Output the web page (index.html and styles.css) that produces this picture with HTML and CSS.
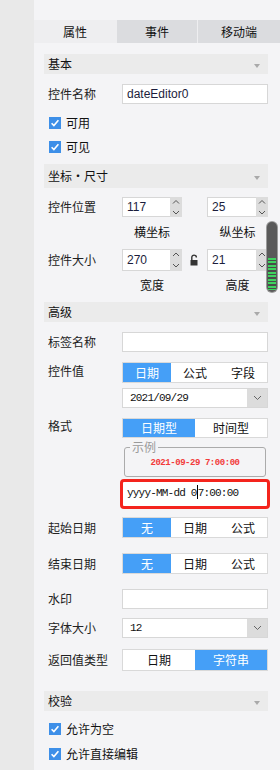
FILE: index.html
```html
<!DOCTYPE html>
<html lang="zh">
<head>
<meta charset="utf-8">
<title>属性</title>
<link rel="stylesheet" href="styles.css">
</head>
<body>
<div class="app">
  <div class="side"></div>
  <div class="panel">
    <div class="tabs">
      <div class="tab active">属性</div>
      <div class="tab">事件</div>
      <div class="tab">移动端</div>
    </div>
    <div class="content">
      <div class="sec m11">基本<i class="tri"></i></div>

      <div class="row m10 h20">
        <span class="lbl">控件名称</span>
        <div class="inp">dateEditor0</div>
      </div>
      <div class="chk m11"><svg class="box" width="12" height="12" viewBox="0 0 12 12"><rect width="12" height="12" fill="#3d8fe8"/><path d="M2.6 6.2 L4.9 8.6 L9.4 3.2" fill="none" stroke="#fff" stroke-width="1.6"/></svg>可用</div>
      <div class="chk m8"><svg class="box" width="12" height="12" viewBox="0 0 12 12"><rect width="12" height="12" fill="#3d8fe8"/><path d="M2.6 6.2 L4.9 8.6 L9.4 3.2" fill="none" stroke="#fff" stroke-width="1.6"/></svg>可见</div>

      <div class="sec sec-tall m9">坐标・尺寸<i class="tri"></i></div>

      <div class="row m9 h20">
        <span class="lbl">控件位置</span>
        <div class="pair">
          <div class="spin"><span class="num">117</span><span class="arrows"><svg width="12" height="20" viewBox="0 0 12 20"><path d="M3 6.5 L6 3.5 L9 6.5 M3 14 L6 17 L9 14" fill="none" stroke="#555" stroke-width="1"/></svg></span></div>
          <span class="gapcell"></span>
          <div class="spin"><span class="num">25</span><span class="arrows"><svg width="12" height="20" viewBox="0 0 12 20"><path d="M3 6.5 L6 3.5 L9 6.5 M3 14 L6 17 L9 14" fill="none" stroke="#555" stroke-width="1"/></svg></span></div>
        </div>
      </div>
      <div class="row m5 h20">
        <span class="lbl"></span>
        <div class="pair subs"><span>横坐标</span><span></span><span>纵坐标</span></div>
      </div>

      <div class="row m7 h22">
        <span class="lbl">控件大小</span>
        <div class="pair">
          <div class="spin"><span class="num">270</span><span class="arrows"><svg width="12" height="22" viewBox="0 0 12 22"><path d="M3 7 L6 4 L9 7 M3 15 L6 18 L9 15" fill="none" stroke="#555" stroke-width="1"/></svg></span></div>
          <span class="gapcell"><svg width="9" height="12" viewBox="0 0 9 12"><path d="M1.8 6 V3.4 A2.3 2.3 0 0 1 6.4 3.4" fill="none" stroke="#333" stroke-width="1.4"/><rect x="0.5" y="6" width="7" height="5.5" fill="#333"/></svg></span>
          <div class="spin"><span class="num">21</span><span class="arrows"><svg width="12" height="22" viewBox="0 0 12 22"><path d="M3 7 L6 4 L9 7 M3 15 L6 18 L9 15" fill="none" stroke="#555" stroke-width="1"/></svg></span></div>
        </div>
      </div>
      <div class="row m4 h20">
        <span class="lbl"></span>
        <div class="pair subs"><span>宽度</span><span></span><span>高度</span></div>
      </div>

      <div class="sec m7">高级<i class="tri"></i></div>

      <div class="row m10 h20">
        <span class="lbl">标签名称</span>
        <div class="inp"></div>
      </div>

      <div class="row top m10">
        <span class="lbl lh19">控件值</span>
        <div class="field">
          <div class="seg s3 h21"><span class="on">日期</span><span>公式</span><span>字段</span></div>
          <div class="sel m5"><span class="val mono">2021/09/29</span><span class="btn"><svg width="9" height="6" viewBox="0 0 9 6"><path d="M1 1 L4.5 4.5 L8 1" fill="none" stroke="#666" stroke-width="1"/></svg></span></div>
        </div>
      </div>

      <div class="row top m10">
        <span class="lbl lh17">格式</span>
        <div class="field">
          <div class="seg s2 h20"><span class="on">日期型</span><span>时间型</span></div>
          <div class="sample">
            <span class="legend">示例</span>
            <span class="sample-text">2021-09-29 7:00:00</span>
          </div>
          <div class="hl"><span class="mono">yyyy-MM-dd 0<i class="caret"></i>7:00:00</span></div>
        </div>
      </div>

      <div class="row m8">
        <span class="lbl">起始日期</span>
        <div class="seg s3 h21 field"><span class="on">无</span><span>日期</span><span>公式</span></div>
      </div>
      <div class="row m15">
        <span class="lbl">结束日期</span>
        <div class="seg s3 h21 field"><span class="on">无</span><span>日期</span><span>公式</span></div>
      </div>

      <div class="row m15 h20">
        <span class="lbl">水印</span>
        <div class="inp"></div>
      </div>

      <div class="row m9">
        <span class="lbl">字体大小</span>
        <div class="sel field"><span class="val mono">12</span><span class="btn"><svg width="9" height="6" viewBox="0 0 9 6"><path d="M1 1 L4.5 4.5 L8 1" fill="none" stroke="#666" stroke-width="1"/></svg></span></div>
      </div>

      <div class="row m11">
        <span class="lbl">返回值类型</span>
        <div class="seg s2 h22 field"><span>日期</span><span class="on">字符串</span></div>
      </div>

      <div class="sec m20">校验<i class="tri"></i></div>
      <div class="chk m10"><svg class="box" width="12" height="12" viewBox="0 0 12 12"><rect width="12" height="12" fill="#3d8fe8"/><path d="M2.6 6.2 L4.9 8.6 L9.4 3.2" fill="none" stroke="#fff" stroke-width="1.6"/></svg>允许为空</div>
      <div class="chk m9"><svg class="box" width="12" height="12" viewBox="0 0 12 12"><rect width="12" height="12" fill="#3d8fe8"/><path d="M2.6 6.2 L4.9 8.6 L9.4 3.2" fill="none" stroke="#fff" stroke-width="1.6"/></svg>允许直接编辑</div>
    </div>
    <div class="scrollbar"><div class="grip"></div></div>
  </div>
</div>
</body>
</html>
```

FILE: styles.css
```css
* { box-sizing: border-box; }
html, body { margin: 0; padding: 0; }
body {
  font-family: "Noto Sans CJK SC", "Liberation Sans", sans-serif;
  font-size: 12px;
  color: #222;
  background: #f4f4f6;
  width: 280px;
  height: 770px;
  overflow: hidden;
}
.app { display: flex; width: 280px; height: 770px; }
.side { width: 34px; flex: none; background: #e9e9e9; }
.panel { flex: 1; position: relative; background: #f4f4f6; padding-top: 20px; }

.tabs { display: flex; gap: 1px; height: 23px; background: #eeeef0; }
.tab {
  display: flex; align-items: center; justify-content: center;
  background: #dbdcdf; color: #111; line-height: 1;
}
.tab:nth-child(1) { width: 82px; background: #eeeef0; }
.tab:nth-child(2) { width: 80px; }
.tab:nth-child(3) { width: 82px; }

.content { padding: 0 12px 0 10px; }

.m4 { margin-top: 4px; } .m5 { margin-top: 5px; } .m7 { margin-top: 7px; }
.m8 { margin-top: 8px; } .m9 { margin-top: 9px; } .m10 { margin-top: 10px; }
.m11 { margin-top: 11px; } .m15 { margin-top: 15px; } .m20 { margin-top: 20px; }
.h20 { height: 20px; } .h21 { height: 21px; } .h22 { height: 22px; }

.sec {
  height: 20px; background: #ebebeb;
  display: flex; align-items: center; justify-content: space-between;
  padding: 0 8px 0 4px; color: #111; line-height: 1;
}
.sec-tall { height: 24px; }
.tri {
  width: 0; height: 0; margin-top: 3px;
  border-left: 3px solid transparent; border-right: 3px solid transparent;
  border-top: 4px solid #a9a9a9;
}

.row { display: flex; align-items: center; }
.row.top { align-items: flex-start; }
.lbl { width: 78px; flex: none; padding-left: 4px; color: #222; line-height: 1; }
.lh19 { line-height: 17px; }
.lh17 { line-height: 15px; }
.field { flex: 1; min-width: 0; }

.inp {
  flex: 1; height: 100%; background: #fff; border: 1px solid #d7d7d7;
  font-family: "Liberation Sans", Arial, sans-serif; color: #1b1d3c;
  padding-left: 4px; display: flex; align-items: center; line-height: 1;
}

.chk { display: flex; align-items: center; height: 16px; padding-left: 5px; gap: 5px; color: #111; line-height: 1; }
.box { flex: none; }

.pair { display: grid; grid-template-columns: 60px 25px 61px; height: 100%; flex: 1; }
.spin { display: flex; height: 100%; }
.num {
  flex: 1; background: #fff; border: 1px solid #d7d7d7; border-right: none;
  font-family: "Liberation Sans", Arial, sans-serif; color: #1b1d3c;
  padding-left: 4px; display: flex; align-items: center; line-height: 1;
}
.arrows { width: 12px; flex: none; background: #dcdcdc; display: flex; align-items: center; }
.gapcell { display: flex; align-items: center; justify-content: center; }
.subs span { text-align: center; line-height: 20px; color: #111; }

.seg { display: grid; background: #fff; border: 1px solid #d9d9d9; }
.s3 { grid-template-columns: repeat(3, 1fr); }
.s2 { grid-template-columns: repeat(2, 1fr); }
.seg span { display: flex; align-items: center; justify-content: center; color: #111; line-height: 1; }
.seg span.on { background: #459ff7; color: #fff; }

.sel { display: flex; height: 20px; background: #fff; border: 1px solid #d7d7d7; }
.sel .val { flex: 1; padding-left: 7px; display: flex; align-items: center; }
.sel .btn { width: 20px; background: #dcdcdc; display: flex; align-items: center; justify-content: center; }

.mono {
  font-family: "Liberation Mono", "DejaVu Sans Mono", monospace;
  font-size: 11px; letter-spacing: -0.8px; color: #111; line-height: 1;
}

.sample {
  position: relative; margin: 9px 2px 0; height: 30px;
  border: 1px solid #ababab; border-radius: 3px;
  display: flex; align-items: center; justify-content: center; padding-top: 2px;
}
.legend {
  position: absolute; top: -7px; left: 5px; padding: 0 2px;
  background: #f4f4f6; color: #9a9a9a; line-height: 12px;
}
.sample-text {
  font-family: "Liberation Mono", monospace; font-weight: bold;
  font-size: 9px; letter-spacing: -0.45px; color: #f23a3a; line-height: 1;
}

.hl {
  margin: 2px -2px 0; height: 30px; background: #fff;
  border: 3px solid #f4241d; border-radius: 4px;
  display: flex; align-items: center; padding-left: 4px;
}
.caret {
  display: inline-block; width: 1px; height: 14px; background: #000;
  vertical-align: middle; margin: -3px 0 0 0;
}

.scrollbar {
  position: absolute; left: 232px; top: 221px; width: 12px; height: 72px;
  background: #9b9b9b; border-radius: 6px; padding: 1px;
}
.grip {
  width: 100%; height: 100%; border-radius: 5px; background: #5a5a5a;
  position: relative; overflow: hidden;
}
.grip::after {
  content: ""; position: absolute; left: 1px; right: 1px; top: 36px; bottom: 2px;
  background: repeating-linear-gradient(to bottom, #3fd25f 0 2px, #4a4a4a 2px 3.5px);
}
```
